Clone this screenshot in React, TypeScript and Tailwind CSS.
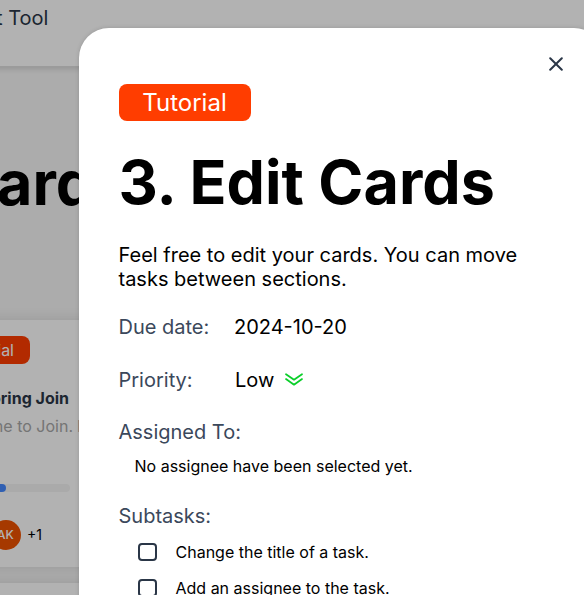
const subtasks = ["Change the title of a task.", "Add an assignee to the task."];

function Board() {
  return (
    <div className="h-full bg-[#f6f6f6]">
      <header className="-ml-4 flex h-[66px] justify-start bg-white pt-1.5 pl-3 shadow-[0_4px_4px_rgba(0,0,0,0.1)]">
        <span className="text-[20px] leading-6 whitespace-nowrap text-[#2a3647]">t Tool</span>
      </header>
      <h1 className="mt-[81px] -ml-[3px] text-[61px] leading-[73px] font-bold text-black">ard</h1>
      <div className="mt-[100px] -ml-4 flex w-[110px] flex-col gap-4">
        <article className="h-[247px] overflow-hidden bg-white pt-4 pl-4 shadow-[0_0_10px_3px_rgba(0,0,0,0.08)]">
          <div className="flex h-7 w-[30px] items-center justify-end rounded-r-lg bg-[#ff3d00] pr-4 text-[16px] text-white">
            <span className="whitespace-nowrap">Tutorial</span>
          </div>
          <div className="mt-6 flex w-[69px] justify-end text-[16px] leading-5 font-bold whitespace-nowrap text-[#2a3647]">Exploring Join</div>
          <div className="mt-2 flex w-[73px] justify-end text-[16px] leading-5 whitespace-nowrap text-[#a8a8a8]">
            <span className="shrink-0">Welcome to Join.</span>
            <span className="-mr-4 ml-1 w-3 shrink-0">E</span>
          </div>
          <div className="mt-12 h-2 w-[70px] rounded-r-full bg-[#f4f4f4]">
            <div className="h-2 w-1.5 rounded-r-full bg-[#4589ff]" />
          </div>
          <div className="mt-7 flex items-center gap-1.5">
            <div className="-ml-[9px] flex size-[30px] items-center justify-center rounded-full bg-[#ee5200] pr-px text-[12px] font-medium text-white">AK</div>
            <span className="text-[14px] leading-5 text-black">+1</span>
          </div>
        </article>
        <article className="h-[40px] bg-white shadow-[0_0_10px_3px_rgba(0,0,0,0.08)]" />
      </div>
    </div>
  );
}

function TaskDialog() {
  return (
    <section className="absolute top-[28px] left-[79px] h-[640px] w-[525px] rounded-[30px] bg-white pr-10 pl-[39.5px] shadow-[0_0_4px_rgba(0,0,0,0.15)]">
      <button className="absolute top-[24px] right-[36px] flex size-6 items-center justify-center" aria-label="Close">
        <svg width="14" height="14" viewBox="0 0 14 14" fill="none" stroke="#2a3647" strokeWidth="2" strokeLinecap="round">
          <path d="M1.2 1.2 12.8 12.8M12.8 1.2 1.2 12.8" />
        </svg>
      </button>
      <div className="mt-14 ml-[0.5px] flex h-[37px] w-[132px] items-center justify-center rounded-lg bg-[#ff3d00] pr-px text-[24px] leading-7 text-white">Tutorial</div>
      <h2 className="mt-[25px] text-[61px] leading-[73px] font-bold whitespace-nowrap text-black">3. Edit Cards</h2>
      <p className="mt-6 w-[420px] text-[20px] leading-6 text-black">Feel free to edit your cards. You can move tasks between sections.</p>
      <div className="mt-6 flex text-[20px] leading-6">
        <span className="w-[115.5px] text-[#3b485b]">Due date:</span>
        <span className="text-black">2024-10-20</span>
      </div>
      <div className="mt-[29px] flex items-center text-[20px] leading-6">
        <span className="w-[116.5px] text-[#3b485b]">Priority:</span>
        <span className="text-black">Low</span>
        <svg className="ml-[9.5px]" width="20" height="14" viewBox="0 0 20 14" fill="none" stroke="#0acf2a" strokeWidth="1.8" strokeLinecap="round" strokeLinejoin="round">
          <path d="m2 1.3 8 5.4 8-5.4M2 6.1l8 5.6 8-5.6" />
        </svg>
      </div>
      <h3 className="mt-7 text-[20px] leading-6 text-[#3b485b]">Assigned To:</h3>
      <p className="mt-3 ml-4 text-[16px] leading-5 text-black">No assignee have been selected yet.</p>
      <h3 className="mt-7 text-[20px] leading-6 text-[#3b485b]">Subtasks:</h3>
      <ul className="mt-3.5 ml-[19.5px] flex flex-col gap-4">
        {subtasks.map((task) => (
          <li key={task} className="flex h-5 items-center gap-[19px] text-[16px] leading-5 text-black">
            <span className="size-[18.5px] rounded-[4px] border-2 border-[#2a3647]" />
            {task}
          </li>
        ))}
      </ul>
    </section>
  );
}

export default function App() {
  return (
    <main className="relative h-[595px] w-[584px] overflow-hidden font-['Inter',sans-serif]">
      <Board />
      <div className="absolute inset-0 bg-black/30">
        <TaskDialog />
      </div>
    </main>
  );
}
